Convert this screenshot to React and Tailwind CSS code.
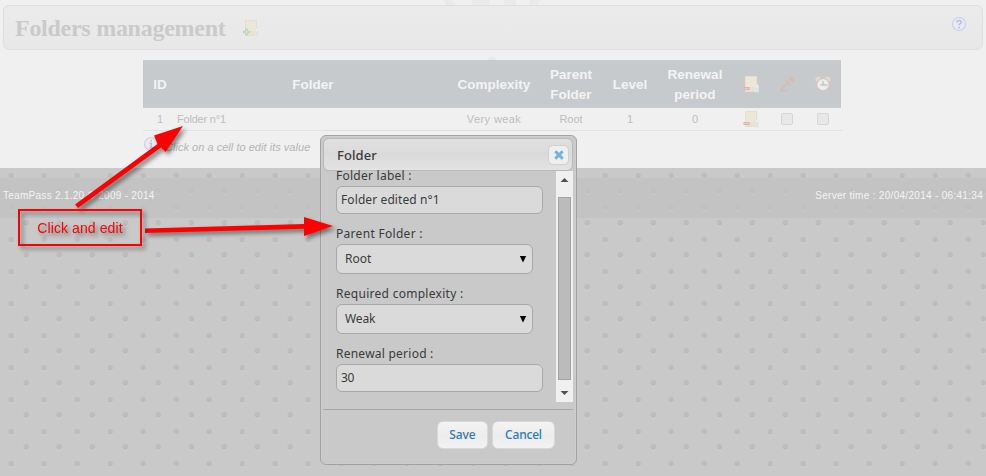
import React from "react";

const COLS =
  "grid grid-cols-[34px_272px_90px_64px_54px_76px_36px_36px_36px] items-center justify-items-center text-center";

function FolderIcon({ kind, className }) {
  return (
    <svg width="16" height="18" viewBox="0 0 16 18" className={className}>
      <rect x="2.5" y="1.5" width="11" height="15" fill="#ece8d8" stroke="#e7dfcc" />
      <path d="M3 12h10v4H3z" fill="#ece1d0" />
      <path d="M12.300 17v-6l1.700-2.500L15.500 11v6z" fill="#eeeeec" stroke="#e1e2dc" strokeWidth=".6" />
      <path d="M13.900 12.500v4" stroke="#c3e0e7" strokeWidth="1.100" />
      {kind === "add" ? (
        <>
          <path d="M3.500 9.500v7M0 13h7" stroke="#b4d6b8" strokeWidth="2.600" />
          <path d="M3.500 10.500v5M1 13h5" stroke="#c8e8ca" strokeWidth="1" />
        </>
      ) : (
        <>
          <rect x="0.400" y="12" width="6.400" height="3" rx=".8" fill="#dfb4b6" />
          <path d="M1.500 13.500h4" stroke="#ebcccc" />
        </>
      )}
    </svg>
  );
}

function GavelIcon() {
  return (
    <svg width="16" height="16" viewBox="0 0 16 16">
      <ellipse cx="5" cy="14.500" rx="4" ry=".8" fill="#bfc2c4" />
      <path d="M1.500 14 9.500 6.500" stroke="#d6bcae" strokeWidth="1.700" strokeLinecap="round" />
      <path d="M7 4.500 11.500 9" stroke="#d7bcb0" strokeWidth="2" />
      <path d="M9 6.700 13 3" stroke="#d9c1b5" strokeWidth="4" />
      <path d="M10.500 1 14.800 5.200" stroke="#d5baad" strokeWidth="2" />
    </svg>
  );
}

function ClockIcon() {
  return (
    <svg width="16" height="16" viewBox="0 0 16 16">
      <circle cx="3.300" cy="3.300" r="2.800" fill="#e1dbcc" stroke="#d9cfba" strokeWidth=".6" />
      <circle cx="12.700" cy="3.300" r="2.800" fill="#e1dbcc" stroke="#d9cfba" strokeWidth=".6" />
      <path d="m3.500 13-1.500 2M12.500 13l1.500 2" stroke="#d6c8c4" strokeWidth="1.200" />
      <circle cx="8" cy="8.600" r="6.200" fill="#eceded" stroke="#dac3c1" strokeWidth="1.200" />
      <path d="M8 5v4h4.500M5.500 9H8" stroke="#b1b5b7" strokeWidth="1" fill="none" />
    </svg>
  );
}

function RoundIcon({ glyph, className }) {
  return (
    <svg width="16" height="16" viewBox="0 0 16 16" className={className}>
      <circle cx="8" cy="8" r="6.500" fill="#e9ebf2" stroke="#c9cfe9" strokeWidth="1.100" />
      {glyph === "help" ? (
        <path d="M6 6.500c0-2.700 4.200-2.500 4.200-.2C10.200 7.700 8.100 7.700 8.100 9.300M8.100 10.800v1.700" stroke="#b5bfe4" strokeWidth="1.600" fill="none" />
      ) : (
        <path d="M8.200 3.700v1.700M6.500 7.200h1.700v4.300M6.300 11.800h3.800" stroke="#b5bfe4" strokeWidth="1.500" fill="none" />
      )}
    </svg>
  );
}

function Check() {
  return <div className="h-3 w-3 rounded-[2px] border border-[#d6d6d6] bg-[#e8e8e8]" />;
}

function TextBox({ children }) {
  return (
    <div className="flex h-7 w-[207px] items-center rounded-md border border-[#a9a9a9] bg-[#dadada] pl-1">
      {children}
    </div>
  );
}

function SelectBox({ children }) {
  return (
    <div className="flex h-[30px] w-[197px] items-center justify-between rounded-md border border-[#a9a9a9] bg-[#dadada] pr-[5px] pl-2">
      {children}
      <svg width="8" height="8" viewBox="0 0 8 8">
        <path d="M.8 1h6.400L4 7.500z" fill="#000" />
      </svg>
    </div>
  );
}

function Dialog() {
  return (
    <div className="absolute top-[135px] left-[320px] flex h-[330px] w-[257px] flex-col rounded-md border border-[#a2a2a2] bg-[#c9c9c9] pt-[2px] pr-[3px] pb-[2px] pl-[2px] font-['Noto_Sans',sans-serif] text-[12px] text-[#3a3a3a] shadow-[inset_0_0_0_1px_#cecece]">
      <div className="flex h-[33px] shrink-0 items-center justify-between rounded-md border border-[#b9b9b9] bg-linear-to-b from-[#e0e0e0] via-[#dadada] to-[#e3e3e3] pr-[3px] pl-[13px]">
        <span className="text-[13px] leading-4 font-medium tracking-[0.1px]">Folder</span>
        <div className="flex h-5 w-[21px] items-center justify-center rounded-[5px] border border-[#cfcfcf] bg-[#efefef]">
          <svg width="10" height="10" viewBox="0 0 10 10">
            <path d="m1.300 1.300 7.400 7.400M8.700 1.300 1.300 8.700" stroke="#70b4e2" strokeWidth="3" />
          </svg>
        </div>
      </div>
      <div className="flex h-[238px] shrink-0 justify-between">
        <div className="flex flex-col pl-[13px]">
          <div className="-mt-[3px] h-[18px] leading-[16px] tracking-[0.25px]">Folder label :</div>
          <TextBox><span className="tracking-[0.1px]">Folder edited n°1</span></TextBox>
          <div className="mt-[11px] h-[19px] leading-[17px] tracking-[0.3px]">Parent Folder :</div>
          <SelectBox><span>Root</span></SelectBox>
          <div className="mt-[11px] h-[19px] leading-[17px] tracking-[0.28px]">Required complexity :</div>
          <SelectBox><span className="tracking-[-0.1px]">Weak</span></SelectBox>
          <div className="mt-[11px] h-[19px] leading-[17px] tracking-[0.24px]">Renewal period :</div>
          <TextBox><span className="tracking-[-0.3px]">30</span></TextBox>
        </div>
        <div className="flex h-[231px] w-[17px] flex-col items-center bg-[#f0f0f0]">
          <svg width="17" height="26" viewBox="0 0 17 26" className="shrink-0">
            <path d="M4.500 11h8L8.500 7z" fill="#505050" />
          </svg>
          <div className="h-[183px] w-[13px] border border-[#a3a3a3] bg-[#bbb]" />
          <svg width="17" height="22" viewBox="0 0 17 22" className="shrink-0">
            <path d="M4.500 11h8L8.500 15z" fill="#505050" />
          </svg>
        </div>
      </div>
      <div className="flex flex-1 justify-end gap-1 border-t border-[#a8a8a8] pt-[11px] pr-[18px] font-medium text-[#2e7ab8]">
        <div className="flex h-7 w-[51px] items-center justify-center rounded-md border border-[#d8d8d8] bg-linear-to-b from-[#f4f4f4] via-[#ececec] to-[#f2f2f2] tracking-[-0.1px]">Save</div>
        <div className="flex h-7 w-[63px] items-center justify-center rounded-md border border-[#d8d8d8] bg-linear-to-b from-[#f4f4f4] via-[#ececec] to-[#f2f2f2] tracking-[-0.2px]">Cancel</div>
      </div>
    </div>
  );
}

function Dot({ x, y }) {
  return (
    <>
      <circle cx={x} cy={y + 0.9} r="2.800" fill="#d4d4d4" />
      <circle cx={x} cy={y} r="2.900" fill="#bdbdbd" />
    </>
  );
}

export default function App() {
  return (
    <div className="relative flex h-[476px] w-[986px] flex-col overflow-hidden bg-[#f0f0f0] font-['Liberation_Sans',Arial,sans-serif]">
      <svg width="986" height="68" className="absolute top-0 left-0">
        <path d="M443 0h9l3 5h-9zM472 0h17v5h-17zM504 0h12v5h-12zM530 0h11l-4 5h-8z" fill="#eaeaea" />
        <circle cx="492" cy="63" r="6" fill="#e9e9e9" />
      </svg>
      <header className="relative mt-[5px] ml-[3px] flex h-[45px] w-[980px] shrink-0 items-center rounded-md border border-[#dedede] bg-linear-to-b from-[#ebebeb] to-[#e8e8e8] pl-[11px]">
        <h1 className="w-[211px] font-['Liberation_Serif',serif] text-[24px] leading-7 font-bold tracking-[-0.27px] whitespace-nowrap text-[#cacaca]">Folders management</h1>
        <FolderIcon kind="add" className="ml-[17px]" />
        <RoundIcon glyph="help" className="mr-[15px] mb-[7px] ml-auto" />
      </header>

      <main className="relative mt-[10px] ml-[143px] h-[108px] w-[700px] shrink-0">
        <div className={COLS + " h-12 w-[698px] bg-[#c7cacd] text-[13.500px] leading-5 font-bold text-[#f3f3f3]"}>
          <span className="pt-[2px]">ID</span>
          <span className="pt-[2px]">Folder</span>
          <span className="pt-[2px]">Complexity</span>
          <span className="pt-[2px]">Parent Folder</span>
          <span className="pt-[2px]">Level</span>
          <span className="pt-[2px]">Renewal period</span>
          <FolderIcon kind="delete" />
          <GavelIcon />
          <ClockIcon />
        </div>
        <div className={COLS + " h-[23px] border-b border-[#e2e2e2] text-[11px] text-[#bdbdbd]"}>
          <span className="text-[#c8b8cb]">1</span>
          <span className="justify-self-start tracking-[-0.2px]">Folder n°1</span>
          <span className="tracking-[0.4px]">Very weak</span>
          <span>Root</span>
          <span>1</span>
          <span>0</span>
          <FolderIcon kind="delete" />
          <Check />
          <Check />
        </div>
        <div className="flex items-center pt-[5px] text-[11px] text-[#b5b5b5] italic">
          <RoundIcon glyph="info" className="mb-[3px]" />
          <span className="mt-[3px] ml-[6px] tracking-[0.03px]">Click on a cell to edit its value</span>
        </div>
      </main>

      <footer className="relative flex-1 bg-[#c9c9c9] pt-[10px]">
        <div className="h-10 bg-[#c4c4c4]" />
        <svg width="986" height="308" className="absolute top-0 left-0">
          <defs>
            <pattern id="studs" width="33" height="32" patternUnits="userSpaceOnUse">
              <Dot x={11.2} y={7.8} />
              <Dot x={26.3} y={23} />
            </pattern>
          </defs>
          <rect width="986" height="308" fill="url(#studs)" />
          <rect y="10" width="986" height="40" fill="#c4c4c4" opacity=".45" />
        </svg>
        <div className="relative -mt-[29px] flex justify-between pr-[3px] pl-[3px] text-[10px] leading-[13px] text-[#f4f4f4]">
          <span className="tracking-[0.28px]">TeamPass 2.1.20 © 2009 - 2014</span>
          <span className="tracking-[0.3px]">Server time : 20/04/2014 - 06:41:34</span>
        </div>
      </footer>

      <Dialog />

      <svg width="986" height="476" className="absolute top-0 left-0 drop-shadow-[3px_3px_2px_rgba(0,0,0,0.450)]">
        <path d="M75 204.500 157.500 144 154 135.500 183 126 165.500 152 161 147.500 78 208z" fill="#f00" />
        <path d="M145 228.500 304 224V217L333 226 304 236V228.800L145 233z" fill="#f00" />
      </svg>
      <div className="absolute top-[209px] left-[18px] flex h-[37px] w-[124px] items-center justify-center border-2 border-[#f00] pt-[2px] text-[14px] tracking-[0.1px] text-[#f00] drop-shadow-[3px_3px_2px_rgba(0,0,0,0.450)]">
        Click and edit
      </div>
    </div>
  );
}
